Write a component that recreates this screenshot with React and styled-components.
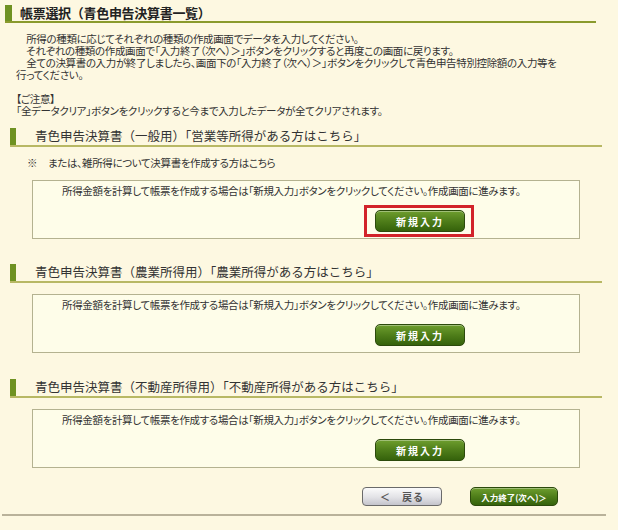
import React from "react";
import styled, { createGlobalStyle } from "styled-components";

const Global = createGlobalStyle`
  html, body { margin: 0; padding: 0; background: #fdf8e1; }
  body {
    font-family: "Noto Sans CJK JP", "Noto Sans", sans-serif;
    color: #333;
    width: 618px;
    height: 530px;
    overflow: hidden;
  }
`;

const Page = styled.div`
  padding: 4px 0 0 5px;
`;

const Title = styled.h1`
  margin: 0 22px 0 0;
  display: flex;
  align-items: center;
  gap: 8px;
  height: 17px;
  border-bottom: 2px solid #8a9a2c;
  font-size: 13px;
  font-weight: bold;
  color: #222;
  line-height: 16px;
  letter-spacing: -0.3px;
  &::before {
    content: "";
    width: 7px;
    height: 16px;
    background: #6f9222;
  }
`;

const bodyText = `
  font-size: 10.5px;
  line-height: 12px;
  letter-spacing: -0.35px;
  font-feature-settings: "palt";
  color: #333;
`;

const Intro = styled.div`
  margin: 10px 10px 0 11px;
  ${bodyText}
`;

const Gap = styled.div`
  height: ${(p) => p.h}px;
`;

const Section = styled.section`
  margin-top: ${(p) => p.top}px;
`;

const SectionHead = styled.h2`
  margin: 0 16px 0 5px;
  display: flex;
  align-items: center;
  gap: 19px;
  height: 18px;
  border-bottom: 2px solid #b8b864;
  font-size: 12.5px;
  font-weight: normal;
  color: #333;
  line-height: 16px;
  &::before {
    content: "";
    width: 6px;
    height: 17px;
    align-self: flex-end;
    background: #6f9222;
  }
`;

const Note = styled.p`
  margin: 10px 0 0 22px;
  ${bodyText}
  span { display: inline-block; width: 21px; }
`;

const Box = styled.div`
  margin: ${(p) => p.top}px 38px 0 27px;
  border: 1px solid #b4b290;
  background: #fefde9;
  padding: 4px 0 6px 29px;
`;

const BoxText = styled.p`
  margin: 0;
  ${bodyText}
`;

const ButtonRow = styled.div`
  display: flex;
  padding-left: 313px;
  margin-top: 13px;
`;

const GreenButton = styled.button`
  position: relative;
  width: ${(p) => p.w}px;
  height: ${(p) => p.h}px;
  padding: 0;
  border: 1px solid #2c4a0c;
  border-radius: 5px;
  background: linear-gradient(#6e9e2e 0%, #4f7e1a 50%, #35620b 100%);
  box-shadow: inset 0 1px 0 rgba(255,255,255,0.35);
  color: #fff;
  font-family: "Noto Sans CJK JP", sans-serif;
  font-size: ${(p) => p.fs}px;
  font-weight: bold;
  letter-spacing: ${(p) => p.ls}px;
  font-feature-settings: "palt";
  cursor: pointer;
  ${(p) =>
    p.marked &&
    `
    &::after {
      content: "";
      position: absolute;
      top: -6px;
      bottom: -6px;
      left: -12px;
      right: -10px;
      border: 3px solid #d2232a;
      pointer-events: none;
    }
  `}
`;

const GreyButton = styled.button`
  width: 80px;
  height: 19px;
  padding: 0;
  border: 1px solid #6a6a6a;
  border-radius: 4px;
  background: linear-gradient(#fbfbfb 0%, #e2e2e6 55%, #c4c4cc 100%);
  color: #555;
  font-family: "Noto Sans CJK JP", sans-serif;
  font-size: 10px;
  font-weight: bold;
  letter-spacing: 1px;
  cursor: pointer;
`;

const Footer = styled.div`
  margin: 19px 12px 0 -3px;
  padding: 0 48px 8px 0;
  display: flex;
  justify-content: flex-end;
  gap: 28px;
  border-bottom: 2px solid #b9b29a;
`;

const sections = [
  {
    top: 10,
    head: "青色申告決算書（一般用）「営業等所得がある方はこちら」",
    note: "または、雑所得について決算書を作成する方はこちら",
    marked: true,
  },
  {
    top: 24,
    head: "青色申告決算書（農業所得用）「農業所得がある方はこちら」",
  },
  {
    top: 25,
    head: "青色申告決算書（不動産所得用）「不動産所得がある方はこちら」",
  },
];

const SP = "\u3000";

export default function App() {
  return (
    <Page>
      <Global />
      <Title>帳票選択（青色申告決算書一覧）</Title>
      <Intro>
        {SP}所得の種類に応じてそれぞれの種類の作成画面でデータを入力してください。
        <br />
        {SP}それぞれの種類の作成画面で「入力終了（次へ）＞」ボタンをクリックすると再度この画面に戻ります。
        <br />
        {SP}全ての決算書の入力が終了しましたら、画面下の「入力終了（次へ）＞」ボタンをクリックして青色申告特別控除額の入力等を
        <br />
        行ってください。
        <Gap h={12} />
        【ご注意】
        <br />
        「全データクリア」ボタンをクリックすると今まで入力したデータが全てクリアされます。
      </Intro>
      {sections.map((s) => (
        <Section key={s.head} top={s.top}>
          <SectionHead>{s.head}</SectionHead>
          {s.note && (
            <Note>
              <span>※</span>
              {s.note}
            </Note>
          )}
          <Box top={s.note ? 11 : 11}>
            <BoxText>
              所得金額を計算して帳票を作成する場合は「新規入力」ボタンをクリックしてください。作成画面に進みます。
            </BoxText>
            <ButtonRow>
              <GreenButton w={90} h={22} fs={10} ls={2} marked={s.marked}>
                新規入力
              </GreenButton>
            </ButtonRow>
          </Box>
        </Section>
      ))}
      <Footer>
        <GreyButton>＜　戻る</GreyButton>
        <GreenButton w={88} h={19} fs={8.5} ls={0}>
          入力終了(次へ)＞
        </GreenButton>
      </Footer>
    </Page>
  );
}
